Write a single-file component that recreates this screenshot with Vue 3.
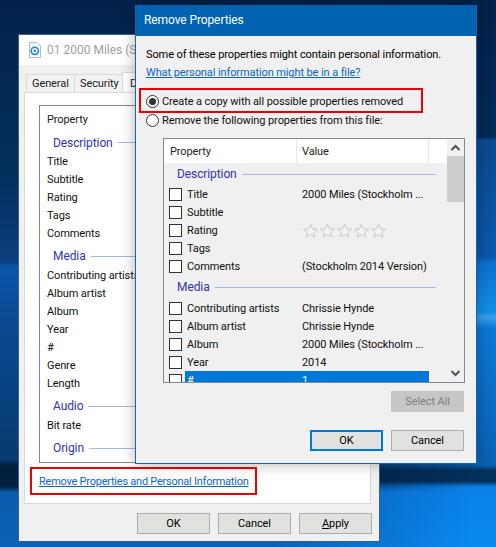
<script setup>
const backRows = [
  { h: 'Description' }, { t: 'Title' }, { t: 'Subtitle' }, { t: 'Rating' }, { t: 'Tags' }, { t: 'Comments' },
  { h: 'Media' }, { t: 'Contributing artists' }, { t: 'Album artist' }, { t: 'Album' }, { t: 'Year' }, { t: '#' }, { t: 'Genre' }, { t: 'Length' },
  { h: 'Audio' }, { t: 'Bit rate' }, { h: 'Origin' }
]
const rows = [
  { h: 'Description' },
  { t: 'Title', v: '2000 Miles (Stockholm ...' },
  { t: 'Subtitle', v: '' },
  { t: 'Rating', stars: true },
  { t: 'Tags', v: '' },
  { t: 'Comments', v: '(Stockholm 2014 Version)' },
  { h: 'Media' },
  { t: 'Contributing artists', v: 'Chrissie Hynde' },
  { t: 'Album artist', v: 'Chrissie Hynde' },
  { t: 'Album', v: '2000 Miles (Stockholm ...' },
  { t: 'Year', v: '2014' },
  { t: '#', v: '1', sel: true }
]
</script>

<template>
  <div class="desk">
    <div class="glow"></div>

    <section class="win back">
      <header class="back-title">
        <svg class="file" width="13" height="16" viewBox="0 0 13 16">
          <path d="M1.5 .5H9L12.5 4V15.5H1.5Z" fill="#f4f6f8" stroke="#b4bcc4" />
          <circle cx="6.8" cy="8.8" r="3.6" fill="none" stroke="#1e88e0" stroke-width="1.6" />
          <circle cx="6.8" cy="8.8" r="1.2" fill="#1e88e0" />
        </svg>
        <span class="back-name">01 2000 Miles (Stockholm 2014 Version)</span>
      </header>
      <div class="back-body">
        <nav class="tabs">
          <span class="tab">General</span>
          <span class="tab">Security</span>
          <span class="tab active">Details</span>
        </nav>
        <div class="panel">
          <div class="plist">
            <div class="phead">Property</div>
            <template v-for="r in backRows" :key="r.h || r.t">
              <div v-if="r.h" class="group back-group"><span>{{ r.h }}</span><i></i></div>
              <div v-else class="prow">{{ r.t }}</div>
            </template>
          </div>
          <a class="link remove-link">Remove Properties and Personal Information</a>
        </div>
        <footer class="back-foot">
          <button class="btn">OK</button>
          <button class="btn">Cancel</button>
          <button class="btn"><u>A</u>pply</button>
        </footer>
      </div>
    </section>

    <section class="win dialog">
      <header class="dlg-title">Remove Properties</header>
      <div class="dlg-body">
        <p class="intro">Some of these properties might contain personal information.</p>
        <a class="link what">What personal information might be in a file?</a>
        <label class="radio first"><span class="dot on"></span>Create a copy with all possible properties removed</label>
        <label class="radio"><span class="dot"></span>Remove the following properties from this file:</label>

        <div class="list">
          <div class="list-main">
            <div class="lhead">
              <span class="c1">Property</span>
              <span class="c2">Value</span>
              <span class="c3"></span>
            </div>
            <div class="lrows">
              <template v-for="r in rows" :key="r.h || r.t">
                <div v-if="r.h" class="group dlg-group"><span>{{ r.h }}</span><i></i></div>
                <div v-else class="lrow">
                  <span class="check"></span>
                  <div class="cells" :class="{ sel: r.sel }">
                    <span class="lname">{{ r.t }}</span>
                    <span v-if="r.stars" class="stars">
                      <svg v-for="n in 5" :key="n" width="17" height="15" viewBox="0 0 17 15">
                        <path d="M7.5 1.2 9.5 5.8 14.5 6.2 10.7 9.4 11.9 14 7.5 11.5 3.1 14 4.3 9.4 .5 6.2 5.5 5.8Z" fill="#f2f2f2" stroke="#c8c8c8" />
                      </svg>
                    </span>
                    <span v-else class="lval">{{ r.v }}</span>
                  </div>
                </div>
              </template>
            </div>
          </div>
          <div class="scroll">
            <svg width="17" height="17" viewBox="0 0 17 17"><path d="M4.5 11 8.5 7 12.5 11" fill="none" stroke="#505050" stroke-width="2" /></svg>
            <div class="thumb"></div>
            <div class="sp"></div>
            <svg width="17" height="17" viewBox="0 0 17 17"><path d="M4.5 6 8.5 10 12.5 6" fill="none" stroke="#505050" stroke-width="2" /></svg>
          </div>
        </div>

        <div class="sel-all"><button class="btn disabled">Select All</button></div>
        <footer class="dlg-foot">
          <button class="btn primary">OK</button>
          <button class="btn">Cancel</button>
        </footer>
      </div>
    </section>

    <div class="mark mark-a"></div>
    <div class="mark mark-b"></div>
  </div>
</template>

<style>
html, body { margin: 0; }
</style>

<style scoped>
.desk {
  position: relative;
  width: 496px;
  height: 547px;
  overflow: hidden;
  background: linear-gradient(180deg, #03224a 0%, #03305e 33%, #0a3f80 48%, #0a55a8 48.6%, #0a4890 60%, #063a70 84%, #031f40 85%, #031f40 89%, #0a5cac 90%, #0a62b8 100%);
  font-family: Roboto, "Liberation Sans", Arial, sans-serif;
  font-size: 11px;
  letter-spacing: -0.1px;
  color: #000;
}
.glow {
  position: absolute;
  inset: 0;
  background: linear-gradient(180deg, #03224a 0%, #042a56 25%, #0a4a90 25.6%, #0a58ac 47%, #0a70d0 48%, #1090e8 57%, #3ca0e8 58%, #0a78d8 60%, #0a62b4 85%, #04305c 86%, #04305c 88%, #0a80e8 89%, #0a88ee 100%);
  -webkit-mask-image: linear-gradient(90deg, transparent 55%, #000 95%);
  mask-image: linear-gradient(90deg, transparent 55%, #000 95%);
}
.win { position: absolute; box-sizing: border-box; }

.back {
  left: 18px;
  top: 34px;
  width: 362px;
  height: 508px;
  display: flex;
  flex-direction: column;
  background: #eff0ef;
  border: 1px solid #3a5f86;
}
.back-title {
  height: 30px;
  flex: none;
  display: flex;
  align-items: center;
  gap: 6px;
  padding-left: 9px;
  background: #fff;
  color: #a0a0a0;
  white-space: nowrap;
  overflow: hidden;
}
.back-name { font-size: 12px; letter-spacing: 0; }
.back-body {
  flex: 1;
  display: flex;
  flex-direction: column;
  padding: 9px 7px 0 5px;
  min-height: 0;
}
.tabs { display: flex; height: 18px; flex: none; padding-left: 2px; }
.tab {
  box-sizing: border-box;
  height: 18px;
  width: 49px;
  line-height: 17px;
  padding-left: 5px;
  background: #f2f2f2;
  border: 1px solid #d9d9d9;
  border-bottom: none;
  margin-right: -1px;
  color: #222;
}
.tab.active { background: #fff; width: 60px; height: 20px; margin-top: -2px; padding-left: 7px; line-height: 21px; }
.panel {
  box-sizing: border-box;
  width: 347px;
  height: 412px;
  flex: none;
  background: #fff;
  border: 1px solid #d9d9d9;
  padding: 12px 0 0 14px;
}
.plist {
  box-sizing: border-box;
  height: 358px;
  width: 320px;
  border: 1px solid #828790;
  padding: 2px 0 0 7px;
  overflow: hidden;
}
.phead { height: 24px; line-height: 24px; color: #1a1a1a; }
.prow { height: 18px; line-height: 18px; color: #111; }
.group { display: flex; align-items: center; color: #3333b0; font-size: 12px; box-sizing: border-box; }
.group i { flex: 1; height: 1px; background: #a8b8e0; margin-left: 5px; }
.back-group { height: 24px; padding: 2px 0 0 6px; }
.phead + .back-group { height: 21px; padding-top: 0; }
.link { color: #0a66cc; text-decoration: underline; }
.remove-link { display: block; margin-top: 10px; height: 18px; line-height: 18px; white-space: nowrap; letter-spacing: -0.24px; }
.back-foot {
  display: flex;
  justify-content: flex-end;
  gap: 8px;
  padding: 9px 0 0;
}
.btn {
  box-sizing: border-box;
  width: 73px;
  height: 21px;
  padding: 0 0 1px;
  background: #e1e2e0;
  border: 1px solid #adadad;
  font: inherit;
  letter-spacing: inherit;
  color: #000;
}

.dialog {
  left: 135px;
  top: 5px;
  width: 342px;
  height: 459px;
  display: flex;
  flex-direction: column;
  background: #eff0ef;
  border: 1px solid #1566ae;
  border-top: none;
  box-shadow: 0 0 14px rgba(0, 0, 0, .3);
}
.dlg-title {
  height: 31px;
  flex: none;
  line-height: 31px;
  padding-left: 8px;
  background: #0063b1;
  color: #fff;
  font-size: 12px;
}
.dlg-body {
  flex: 1;
  display: flex;
  flex-direction: column;
  padding: 10px 0 0 10px;
}
.intro { margin: 0; height: 18px; line-height: 18px; flex: none; }
.what { height: 18px; line-height: 18px; flex: none; align-self: flex-start; }
.radio { display: flex; align-items: center; height: 19px; color: #111; flex: none; }
.radio.first { margin-top: 10px; }
.dot {
  box-sizing: border-box;
  width: 13px;
  height: 13px;
  margin-right: 3px;
  border: 1px solid #333;
  border-radius: 50%;
  background: #fff;
  position: relative;
}
.dot.on::after {
  content: "";
  position: absolute;
  inset: 2px;
  border-radius: 50%;
  background: #333;
}
.list {
  box-sizing: border-box;
  margin: 8px 0 0 17px;
  width: 302px;
  height: 245px;
  border: 1px solid #828790;
  display: flex;
  flex: none;
}
.list-main { flex: 1; min-width: 0; display: flex; flex-direction: column; overflow: hidden; }
.lhead { display: flex; height: 24px; flex: none; background: #fff; line-height: 26px; color: #222; }
.lhead span { box-sizing: border-box; border-right: 1px solid #e6e6e6; }
.c1 { width: 133px; padding-left: 6px; }
.c2 { width: 132px; padding-left: 5px; }
.c3 { flex: 1; border-right: none !important; }
.lrows { flex: 1; overflow: hidden; }
.dlg-group { height: 22px; padding: 0 11px 0 13px; }
.lrow + .dlg-group { height: 24px; }
.lrow { display: flex; height: 18px; align-items: center; padding-left: 5px; }
.check {
  box-sizing: border-box;
  width: 13px;
  height: 13px;
  flex: none;
  border: 1px solid #333;
  background: #fff;
}
.cells {
  display: flex;
  align-items: center;
  width: 244px;
  height: 18px;
  margin-left: 3px;
  color: #111;
}
.cells.sel { background: #0078d7; color: #fff; }
.lname { width: 115px; padding-left: 2px; white-space: nowrap; flex: none; }
.lval { white-space: nowrap; }
.stars { display: flex; margin-left: 1px; }
.scroll { width: 17px; flex: none; display: flex; flex-direction: column; }
.scroll svg { flex: none; }
.thumb { height: 46px; background: #cdcdcb; flex: none; }
.sp { flex: 1; }
.sel-all { display: flex; justify-content: flex-end; padding: 8px 12px 0 0; }
.btn.disabled { background: #c6c7c5; border-color: #c6c7c5; color: #808080; padding: 0; }
.dlg-foot { display: flex; justify-content: flex-end; gap: 8px; padding: 18px 12px 0 0; }
.btn.primary { border: 2px solid #0078d7; }

.mark { position: absolute; box-sizing: border-box; border: 2px solid #ee0000; }
.mark-a { left: 139px; top: 88px; width: 284px; height: 25px; }
.mark-b { left: 30px; top: 467px; width: 227px; height: 28px; }
</style>
